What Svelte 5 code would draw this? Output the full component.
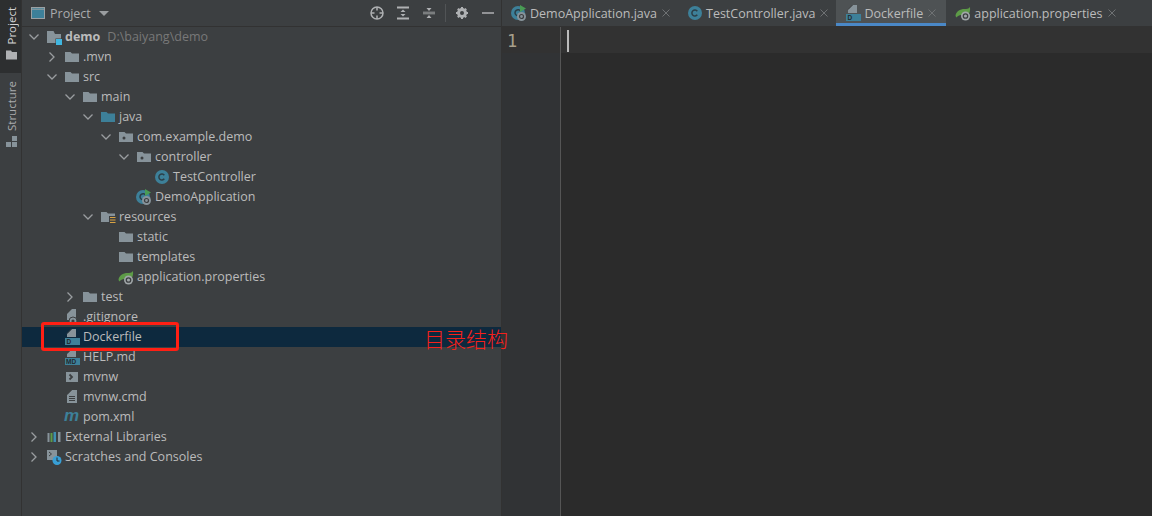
<script>
  const rows = [
    { d: 0, open: true, icon: 'module', name: 'demo', hint: 'D:\\baiyang\\demo' },
    { d: 1, open: false, icon: 'folder', name: '.mvn' },
    { d: 1, open: true, icon: 'folder', name: 'src' },
    { d: 2, open: true, icon: 'folder', name: 'main' },
    { d: 3, open: true, icon: 'source', name: 'java' },
    { d: 4, open: true, icon: 'package', name: 'com.example.demo' },
    { d: 5, open: true, icon: 'package', name: 'controller' },
    { d: 6, icon: 'class', name: 'TestController' },
    { d: 5, icon: 'app', name: 'DemoApplication' },
    { d: 3, open: true, icon: 'resources', name: 'resources' },
    { d: 4, icon: 'folder', name: 'static' },
    { d: 4, icon: 'folder', name: 'templates' },
    { d: 4, icon: 'spring', name: 'application.properties' },
    { d: 2, open: false, icon: 'folder', name: 'test' },
    { d: 1, icon: 'ignore', name: '.gitignore' },
    { d: 1, icon: 'docker', name: 'Dockerfile', selected: true },
    { d: 1, icon: 'md', name: 'HELP.md' },
    { d: 1, icon: 'shell', name: 'mvnw' },
    { d: 1, icon: 'text', name: 'mvnw.cmd' },
    { d: 1, icon: 'maven', name: 'pom.xml' },
    { d: 0, open: false, icon: 'libs', name: 'External Libraries' },
    { d: 0, open: false, icon: 'scratch', name: 'Scratches and Consoles' }
  ];

  const tabs = [
    { icon: 'app', name: 'DemoApplication.java' },
    { icon: 'class', name: 'TestController.java' },
    { icon: 'docker', name: 'Dockerfile', active: true },
    { icon: 'spring', name: 'application.properties' }
  ];
</script>

{#snippet icon(kind)}
  {#if kind === 'maven'}
    <span class="maven">m</span>
  {:else}
    <svg class="ico" viewBox="0 0 16 16" width="16" height="16">
      {#if kind === 'folder' || kind === 'package' || kind === 'resources'}
        <path d="M1 3h5.500L8 4.500h7V13H1z" fill="#87939a" />
        {#if kind === 'package'}
          <circle cx="6" cy="9" r="1.500" fill="#3c3f41" />
        {/if}
        {#if kind === 'resources'}
          <rect x="9" y="7" width="7" height="9" fill="#3c3f41" />
          <path d="M10 8.500h5.500M10 11h5.500M10 13.500h5.500" stroke="#d9a343" stroke-width="1.200" />
        {/if}
      {:else if kind === 'module'}
        <path d="M1 2h6.500L9 5h6v9H1z" fill="#87939a" />
        <rect x="9.500" y="9.500" width="6.500" height="6.500" fill="#3c3f41" />
        <rect x="10" y="10" width="6" height="6" fill="#40b6e0" />
      {:else if kind === 'source'}
        <path d="M1 3h5.500L8 4.500h7V13H1z" fill="#3d8099" />
      {:else if kind === 'class'}
        <circle cx="8" cy="8" r="7" fill="#3d8099" />
        <path d="M10.300 6.200A3 3 0 1 0 10.300 9.800" fill="none" stroke="#2b3e47" stroke-width="1.500" />
      {:else if kind === 'app'}
        <circle cx="7" cy="8" r="7" fill="#3d8099" />
        <path d="M9.500 6A3 3 0 1 0 9 10" fill="none" stroke="#2b3e47" stroke-width="1.500" />
        <path d="M9 0l6 3.500L9 7z" fill="#499c54" />
        <circle cx="10.500" cy="11.500" r="4.500" fill="#87939a" />
        <circle cx="10.500" cy="11.500" r="2" fill="none" stroke="#3c3f41" stroke-width="1.200" />
      {:else if kind === 'spring'}
        <path d="M0.500 11C1 5.500 6 3.500 11 4c2 0 3-1 4-2 .5 4-.5 7-3 8H7c-2 0-4 .5-5.500 2.500z" fill="#5d9b47" />
        <circle cx="10.500" cy="11" r="4.500" fill="#a0a6a8" />
        <circle cx="10.500" cy="11" r="2.200" fill="none" stroke="#3c3f41" stroke-width="1.300" />
      {:else if kind === 'ignore'}
        <path d="M8 0h4v11H3V5z" fill="#87939a" />
        <circle cx="9" cy="12" r="4" fill="#87939a" stroke="#3c3f41" />
        <circle cx="9" cy="12" r="1.600" fill="#3c3f41" />
      {:else if kind === 'docker' || kind === 'md'}
        <path d="M8 0h4v8H3V5z" fill="#87939a" />
        <path d="M3 4.500L7.500 0" stroke="#3c3f41" stroke-width=".8" />
        <rect x="1" y="9" width="15" height="7" fill="#3d8099" />
        {#if kind === 'docker'}
          <text class="badge" x="2.500" y="15">D</text>
        {:else}
          <text class="badge" x="2" y="15">MD</text>
        {/if}
      {:else if kind === 'shell'}
        <rect x="2" y="3" width="12" height="10" fill="#87939a" />
        <path d="M5.500 5.500L8 8l-2.500 2.500" fill="none" stroke="#3c3f41" stroke-width="1.800" />
      {:else if kind === 'text'}
        <path d="M8 1h5v13H3V6z" fill="#87939a" />
        <path d="M3 5.500L7.500 1" stroke="#3c3f41" stroke-width=".8" />
        <path d="M5 7.500h6M5 9.500h6M5 11.500h6" stroke="#3c3f41" stroke-width="1" />
      {:else if kind === 'libs'}
        <path d="M1.500 4h2v9h-2z" fill="#87939a" />
        <path d="M4.500 4h2v9h-2z" fill="#5d9b47" />
        <path d="M7.500 3h2.500v10H7.500z" fill="#3d8fb0" />
        <path d="M12 3h2.500v10H12z" fill="#87939a" />
      {:else if kind === 'scratch'}
        <path d="M1 1h10v10H1z" fill="#87939a" />
        <path d="M3 3l2.500 2L3 7" fill="none" stroke="#3c3f41" stroke-width="1" />
        <circle cx="11" cy="11.500" r="4.500" fill="#389fd6" />
        <path d="M11 8.500v3.500h2.500" fill="none" stroke="#23292d" stroke-width="1" />
      {/if}
    </svg>
  {/if}
{/snippet}

<div class="ide">
  <nav class="strip">
    <div class="strip-item active">
      <svg viewBox="0 0 12 10" width="12" height="10"><path d="M0 .5h5l1 1.500h5V9.500H0z" fill="#afb1b3" /></svg>
      <span class="vert">Project</span>
    </div>
    <div class="strip-item">
      <svg viewBox="0 0 12 12" width="12" height="12"><path d="M0 6h5v5H0zM6 6h5v5H6zM6 0h5v5H6z" fill="#87939a" /></svg>
      <span class="vert">Structure</span>
    </div>
  </nav>

  <aside class="panel">
    <header class="panel-head">
      <svg viewBox="0 0 14 12" width="14" height="12">
        <rect x=".5" y=".5" width="13" height="11" fill="#3d8099" stroke="#9aa0a3" />
        <path d="M1 2.200h12" stroke="#9aa0a3" />
      </svg>
      <span class="panel-title">Project</span>
      <span class="caret"></span>
      <div class="tools">
        <svg viewBox="0 0 16 16" width="16" height="16">
          <circle cx="8" cy="8" r="6" fill="none" stroke="#afb1b3" stroke-width="1.500" />
          <path d="M8 2v3.500M8 10.500V14M2 8h3.500M10.500 8H14" stroke="#afb1b3" stroke-width="1.500" />
        </svg>
        <svg viewBox="0 0 16 16" width="16" height="16">
          <path d="M2 2.500h12M2 13.500h12" stroke="#afb1b3" stroke-width="1.800" />
          <path d="M8 4.500L10.500 7h-5zM8 11.500L10.500 9h-5z" fill="#afb1b3" />
        </svg>
        <svg viewBox="0 0 16 16" width="16" height="16">
          <path d="M2 7.200h12M2 8.800h12" stroke="#afb1b3" stroke-width=".8" />
          <path d="M8 6L10.500 3h-5zM8 10l2.500 3h-5z" fill="#afb1b3" />
        </svg>
        <span class="sep"></span>
        <svg viewBox="0 0 16 16" width="16" height="16">
          <circle cx="8" cy="8" r="3.500" fill="none" stroke="#afb1b3" stroke-width="3" />
          <path d="M8 2v2M8 12v2M2 8h2M12 8h2M3.800 3.800l1.500 1.500M10.700 10.700l1.500 1.500M12.200 3.800l-1.500 1.500M5.300 10.700l-1.500 1.500" stroke="#afb1b3" stroke-width="2" />
        </svg>
        <svg viewBox="0 0 16 16" width="16" height="16">
          <path d="M2 8h12" stroke="#afb1b3" stroke-width="1.500" />
        </svg>
      </div>
    </header>

    <ul class="tree">
      {#each rows as row}
        <li class="row" class:selected={row.selected} style="padding-left: {6 + row.d * 18}px">
          <span class="arrow">
            {#if row.open === true}
              <svg viewBox="0 0 12 12" width="12" height="12"><path d="M1.500 3.500L6 8l4.500-4.500" fill="none" stroke="#9a9da0" stroke-width="1.300" /></svg>
            {:else if row.open === false}
              <svg viewBox="0 0 12 12" width="12" height="12"><path d="M3.500 1.500L8 6l-4.500 4.500" fill="none" stroke="#9a9da0" stroke-width="1.300" /></svg>
            {/if}
          </span>
          {@render icon(row.icon)}
          <span class="name" class:bold={row.icon === 'module'}>{row.name}</span>
          {#if row.hint}<span class="hint">{row.hint}</span>{/if}
        </li>
      {/each}
    </ul>

    <div class="mark"></div>
    <div class="note">目录结构</div>
  </aside>

  <main class="editor">
    <div class="tabs">
      {#each tabs as tab}
        <div class="tab" class:active={tab.active}>
          {@render icon(tab.icon)}
          <span class="name">{tab.name}</span>
          <svg class="close" viewBox="0 0 8 8" width="8" height="8"><path d="M.5.500l7 7M7.500.500l-7 7" stroke="#6e7173" stroke-width="1" /></svg>
        </div>
      {/each}
    </div>
    <div class="code">
      <div class="gutter"><span class="num">1</span></div>
      <div class="lines">
        <div class="current"><span class="cursor"></span></div>
      </div>
    </div>
  </main>
</div>

<style>
  :global(body) {
    margin: 0;
    background: #3c3f41;
  }

  .ide {
    display: flex;
    width: 1152px;
    height: 516px;
    overflow: hidden;
    font-family: "Open Sans", "Noto Sans", sans-serif;
    font-size: 12.5px;
    color: #bbbbbb;
  }

  /* tool window strip */
  .strip {
    width: 21px;
    flex: none;
    border-right: 1px solid #323232;
    display: flex;
    flex-direction: column;
  }

  .strip-item {
    display: flex;
    flex-direction: column-reverse;
    align-items: center;
    justify-content: flex-end;
    gap: 5px;
    padding: 7px 0 7px 2px;
    color: #a9abad;
    font-size: 11.5px;
  }

  .strip-item:last-child {
    padding-top: 8px;
  }

  .strip-item.active {
    background: #2d2f30;
    color: #d4d4d4;
    height: 59px;
  }

  .vert {
    writing-mode: vertical-rl;
    transform: rotate(180deg);
    line-height: 21px;
  }

  /* project panel */
  .panel {
    width: 479px;
    flex: none;
    position: relative;
    border-right: 1px solid #323232;
  }

  .panel-head {
    height: 26px;
    border-bottom: 1px solid #323232;
    display: flex;
    align-items: center;
    padding-left: 9px;
  }

  .panel-title {
    margin-left: 5px;
    color: #a9abad;
  }

  .caret {
    margin-left: 8px;
    width: 0;
    height: 0;
    border-left: 5px solid transparent;
    border-right: 5px solid transparent;
    border-top: 5px solid #9a9da0;
  }

  .tools {
    margin-left: auto;
    display: flex;
    align-items: center;
    gap: 10px;
    padding-right: 5px;
  }

  .sep {
    width: 1px;
    height: 18px;
    background: #515456;
    margin: 0 -2px;
  }

  .tree {
    list-style: none;
    margin: 0;
    padding: 0;
  }

  .row {
    height: 20px;
    display: flex;
    align-items: center;
    white-space: nowrap;
  }

  .row.selected {
    background: #0d293e;
  }

  .arrow {
    width: 12px;
    height: 12px;
    flex: none;
    margin-right: 6px;
    display: flex;
  }

  .ico {
    flex: none;
  }

  .row .name {
    margin: 0 0 2px 3px;
  }

  .bold {
    font-weight: 700;
  }

  .hint {
    margin: 0 0 2px 7px;
    color: #787878;
  }

  .badge {
    font: 700 6.500px "Liberation Sans", sans-serif;
    fill: #23292d;
  }

  .maven {
    flex: none;
    width: 16px;
    height: 16px;
    margin-bottom: 2px;
    font: italic 700 17px/16px "Liberation Sans", sans-serif;
    color: #3d8099;
  }

  /* the red annotation drawn over the screenshot */
  .mark {
    position: absolute;
    left: 19px;
    top: 322px;
    width: 132px;
    height: 23px;
    border: 3px solid #ff1f14;
    border-radius: 3px;
  }

  .note {
    position: absolute;
    left: 402px;
    top: 325px;
    font: 300 21px "Noto Sans CJK SC", sans-serif;
    line-height: 26px;
    color: #f5211b;
    white-space: nowrap;
  }

  /* editor */
  .editor {
    flex: 1;
    display: flex;
    flex-direction: column;
    min-width: 0;
  }

  .tabs {
    height: 26px;
    flex: none;
    display: flex;
    border-bottom: 1px solid #323232;
  }

  .tab {
    display: flex;
    align-items: center;
    padding: 0 8px 0 9px;
    gap: 3px;
    height: 26px;
    box-sizing: border-box;
    white-space: nowrap;
  }

  .tab.active {
    background: #4e5254;
    border-bottom: 3px solid #4a88c7;
    padding-top: 3px;
    padding-right: 10px;
  }

  .close {
    margin-left: 2px;
  }

  .code {
    flex: 1;
    display: flex;
    background: #2b2b2b;
  }

  .gutter {
    width: 58px;
    flex: none;
    background: #313335;
    border-right: 1px solid #555555;
  }

  .num {
    display: block;
    height: 26px;
    background: #323232;
    line-height: 28px;
    padding-left: 5px;
    font-family: "DejaVu Sans Mono", monospace;
    font-size: 17px;
    color: #a8a08c;
  }

  .lines {
    flex: 1;
  }

  .current {
    height: 26px;
    background: #323232;
    padding: 3px 0 0 6px;
    box-sizing: border-box;
  }

  .cursor {
    display: block;
    width: 2px;
    height: 22px;
    background: #bbbbbb;
  }
</style>
